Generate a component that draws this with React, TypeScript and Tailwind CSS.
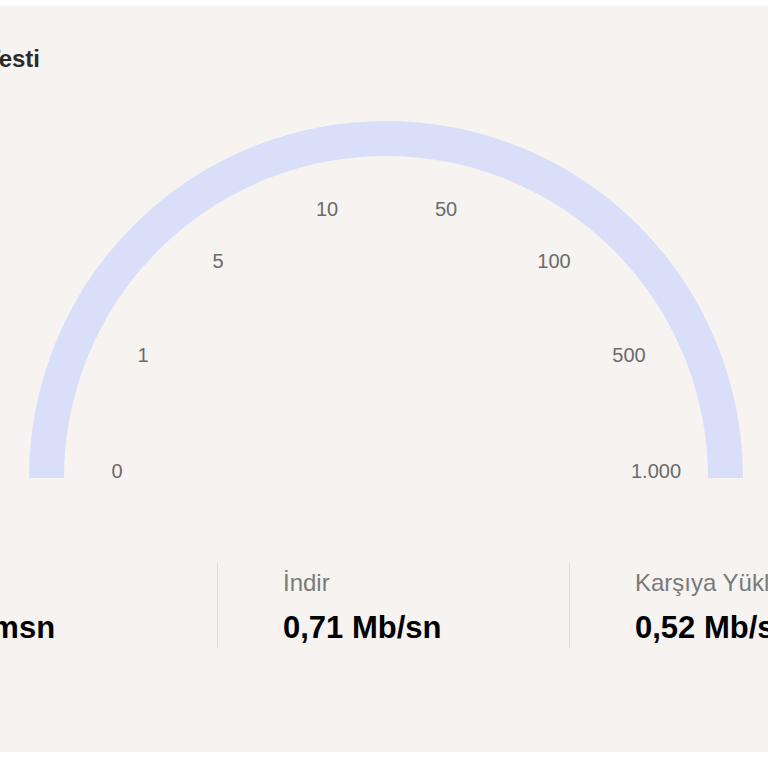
import React from "react";

const TICKS = [
  { label: "0", x: 117, y: 365 },
  { label: "1", x: 143, y: 249 },
  { label: "5", x: 218, y: 155 },
  { label: "10", x: 327, y: 103 },
  { label: "50", x: 446, y: 103 },
  { label: "100", x: 554, y: 155 },
  { label: "500", x: 629, y: 249 },
  { label: "1.000", x: 656, y: 365 },
];

const STATS = [
  { label: "Ping", value: "138 msn" },
  { label: "İndir", value: "0,71 Mb/sn" },
  { label: "Karşıya Yükle", value: "0,52 Mb/sn" },
];

function Gauge() {
  const cx = 386;
  const cy = 372;
  const r = 339.5;
  return (
    <div className="relative mt-[35px] h-[380px] w-[768px] shrink-0">
      <svg width="768" height="380" className="absolute left-0 top-0">
        <path
          d={`M ${cx - r} ${cy} A ${r} ${r} 0 0 1 ${cx + r} ${cy}`}
          fill="none"
          stroke="#d9dff9"
          strokeWidth="35"
        />
      </svg>
      {TICKS.map((t) => (
        <span
          key={t.label}
          className="absolute -translate-x-1/2 -translate-y-1/2 text-[20px] leading-none text-[#6b6b6b]"
          style={{ left: t.x, top: t.y }}
        >
          {t.label}
        </span>
      ))}
    </div>
  );
}

export default function App() {
  return (
    <div
      className="h-[768px] w-[768px] overflow-hidden bg-white pt-[6px]"
      style={{ fontFamily: '"Liberation Sans", Arial, sans-serif' }}
    >
      <div className="flex h-[746px] flex-col overflow-hidden bg-[#f6f3f1]">
        <div className="mt-[41px] flex h-[24px] w-[40px] shrink-0 justify-end whitespace-nowrap text-[24px] font-bold leading-none text-[#2b2b2b]">
          Hız Testi
        </div>

        <Gauge />

        <div className="mt-[77px] -ml-[134px] flex shrink-0">
          {STATS.map((s, i) => (
            <div
              key={s.label}
              className={
                "flex h-[85px] w-[352px] shrink-0 flex-col whitespace-nowrap pl-[65px] pt-[8px] " +
                (i < STATS.length - 1 ? "border-r border-[#e2dedb]" : "")
              }
            >
              <span className="text-[24px] leading-none text-[#7a7a7a]">{s.label}</span>
              <span className="mt-[17px] text-[31px] font-bold leading-none text-black">{s.value}</span>
            </div>
          ))}
        </div>
      </div>
    </div>
  );
}
